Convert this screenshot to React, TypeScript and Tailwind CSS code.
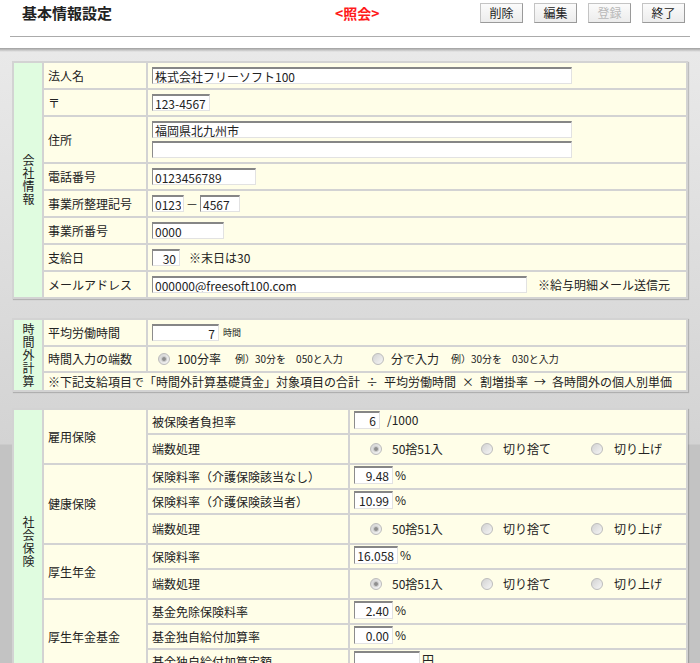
import React from "react";

const fieldBase =
  "h-[17px] bg-white border border-[#e2e2e2] border-t-2 border-t-[#868686] border-l-[#8c8c8c] px-[2px] text-[12px] leading-[13px] text-[#222] outline-none align-middle";

function Field({ w, value, right, tall }: { w: string; value?: string; right?: boolean; tall?: boolean }) {
  return (
    <input
      readOnly
      value={value ?? ""}
      className={`${fieldBase} ${w} ${right ? "text-right pr-[3px]" : ""} ${tall ? "h-[18px]" : ""}`}
    />
  );
}

function Radio({ checked }: { checked?: boolean }) {
  return (
    <span className="inline-flex w-[12px] h-[12px] shrink-0 items-center justify-center rounded-full border border-[#bcbcbc] bg-[linear-gradient(135deg,#d2d2d2,#f6f6f6)]">
      {checked && <span className="w-[6px] h-[6px] rounded-full border border-[#cfcfcf] bg-[#8e8e8e]" />}
    </span>
  );
}

function Vertical({ text }: { text: string }) {
  return (
    <div className="flex justify-center">
      <span className="[writing-mode:vertical-rl] [text-orientation:upright] text-[12px] leading-[14px] tracking-[1px]">
        {text}
      </span>
    </div>
  );
}

function Rounding() {
  return (
    <div className="flex items-center text-[12px] pl-[16px]">
      <div className="flex items-center gap-[10px] w-[111px]">
        <Radio checked />
        <span>50捨51入</span>
      </div>
      <div className="flex items-center gap-[10px] w-[110px]">
        <Radio />
        <span>切り捨て</span>
      </div>
      <div className="flex items-center gap-[11px]">
        <Radio />
        <span>切り上げ</span>
      </div>
    </div>
  );
}

function Rate({ w, v, unit, gap }: { w: string; v?: string; unit: string; gap?: string }) {
  return (
    <div className="flex items-center">
      <Field w={w} value={v} right tall />
      <span className={gap ?? "ml-[2px]"}>{unit}</span>
    </div>
  );
}

const green = "bg-[#e0fce0] align-middle";
const label = "bg-[#fffee8] px-[4px] text-[12px] leading-[14px] whitespace-nowrap";
const value = "bg-[#fffee8] px-[4px] text-[12px] leading-[14px] whitespace-nowrap";
const top = "align-top pt-[1px]";
const tableCls =
  "w-[676px] table-fixed border-separate border-spacing-[2px] bg-[#d3d3d3] shadow-[1px_1px_1px_rgba(0,0,0,0.18)]";

export default function App() {
  return (
    <div className="min-h-[663px] bg-white text-[#222] font-['Noto_Sans_CJK_JP','Liberation_Sans',sans-serif]">
      {/* header */}
      <div className="h-[48px] pt-[3px]">
        <div className="flex items-center h-[20px]">
          <h1 className="w-[335px] pl-[22px] text-[15px] font-bold leading-[20px]">基本情報設定</h1>
          <span className="w-[145px] text-[14px] font-bold text-[#ff1a1a] leading-[20px]">&lt;照会&gt;</span>
          <div className="flex gap-[11px]">
            {["削除", "編集", "登録", "終了"].map((b) => (
              <button
                key={b}
                className={`w-[43px] h-[20px] border border-[#c4c4c4] border-r-[#9a9a9a] border-b-[#9a9a9a] bg-[linear-gradient(#fbfbfb,#ececec)] text-[12px] leading-[16px] ${
                  b === "登録" ? "text-[#b9b9b9]" : "text-[#222]"
                }`}
              >
                {b}
              </button>
            ))}
          </div>
        </div>
        <div className="mx-[10px] mt-[13px] border-t border-[#ababab]" />
      </div>
      <div className="h-[4px] bg-[linear-gradient(#9e9e9e,#e9e9e9)]" />

      <div className="px-[12px] pt-[9px] pb-[20px] bg-[linear-gradient(#e9e9e9,#d3d3d3_392px,#c3c3c3_393px)]">
        {/* 会社情報 */}
        <table className={tableCls}>
          <colgroup>
            <col className="w-[28px]" />
            <col className="w-[102px]" />
            <col />
          </colgroup>
          <tbody>
            <tr>
              <td rowSpan={8} className={green}>
                <Vertical text="会社情報" />
              </td>
              <td className={`${label} h-[25px]`}>法人名</td>
              <td className={value}>
                <Field w="w-[420px]" value="株式会社フリーソフト100" />
              </td>
            </tr>
            <tr>
              <td className={`${label} h-[25px]`}>〒</td>
              <td className={value}>
                <Field w="w-[58px]" value="123-4567" />
              </td>
            </tr>
            <tr>
              <td className={`${label} h-[45px]`}>住所</td>
              <td className={value}>
                <div className="flex flex-col gap-[3px]">
                  <Field w="w-[420px]" value="福岡県北九州市" />
                  <Field w="w-[420px]" />
                </div>
              </td>
            </tr>
            <tr>
              <td className={`${label} h-[25px]`}>電話番号</td>
              <td className={value}>
                <Field w="w-[104px]" value="0123456789" />
              </td>
            </tr>
            <tr>
              <td className={`${label} h-[25px]`}>事業所整理記号</td>
              <td className={value}>
                <div className="flex items-center">
                  <Field w="w-[32px]" value="0123" />
                  <span className="w-[16px] text-center">－</span>
                  <Field w="w-[40px]" value="4567" />
                </div>
              </td>
            </tr>
            <tr>
              <td className={`${label} h-[25px]`}>事業所番号</td>
              <td className={value}>
                <Field w="w-[72px]" value="0000" />
              </td>
            </tr>
            <tr>
              <td className={`${label} h-[25px]`}>支給日</td>
              <td className={value}>
                <div className="flex items-center">
                  <Field w="w-[28px]" value="30" right />
                  <span className="ml-[9px]">※末日は30</span>
                </div>
              </td>
            </tr>
            <tr>
              <td className={`${label} h-[25px]`}>メールアドレス</td>
              <td className={value}>
                <div className="flex items-center">
                  <Field w="w-[375px]" value="000000@freesoft100.com" />
                  <span className="ml-[11px]">※給与明細メール送信元</span>
                </div>
              </td>
            </tr>
          </tbody>
        </table>

        {/* 時間外計算 */}
        <table className={`${tableCls} mt-[19px]`}>
          <colgroup>
            <col className="w-[28px]" />
            <col className="w-[102px]" />
            <col />
          </colgroup>
          <tbody>
            <tr>
              <td rowSpan={3} className={green}>
                <Vertical text="時間外計算" />
              </td>
              <td className={`${label} h-[25px]`}>平均労働時間</td>
              <td className={value}>
                <div className="flex items-center">
                  <Field w="w-[67px]" value="7" right />
                  <span className="ml-[4px] text-[9px]">時間</span>
                </div>
              </td>
            </tr>
            <tr>
              <td className={`${label} h-[24px]`}>時間入力の端数</td>
              <td className={value}>
                <div className="flex items-center pl-[6px]">
                  <div className="flex items-center w-[214px]">
                    <Radio checked />
                    <span className="ml-[7px]">100分率</span>
                    <span className="ml-[14px] text-[10px]">例）30分を　050と入力</span>
                  </div>
                  <div className="flex items-center">
                    <Radio />
                    <span className="ml-[7px]">分で入力</span>
                    <span className="ml-[12px] text-[10px]">例）30分を　030と入力</span>
                  </div>
                </div>
              </td>
            </tr>
            <tr>
              <td colSpan={2} className={`${label} h-[17px]`}>
                ※下記支給項目で「時間外計算基礎賃金」対象項目の合計
                <span className="mx-[6px]">÷</span>平均労働時間
                <span className="mx-[6px]">×</span>割増掛率
                <span className="mx-[6px]">→</span>各時間外の個人別単価
              </td>
            </tr>
          </tbody>
        </table>

        {/* 社会保険 */}
        <table className={`${tableCls} mt-[16px]`}>
          <colgroup>
            <col className="w-[28px]" />
            <col className="w-[102px]" />
            <col className="w-[200px]" />
            <col />
          </colgroup>
          <tbody>
            <tr>
              <td rowSpan={10} className={green}>
                <Vertical text="社会保険" />
              </td>
              <td rowSpan={2} className={label}>雇用保険</td>
              <td className={`${label} h-[23px]`}>被保険者負担率</td>
              <td className={`${value} ${top}`}>
                <Rate w="w-[26px]" v="6" unit="/1000" gap="ml-[7px]" />
              </td>
            </tr>
            <tr>
              <td className={`${label} h-[28px]`}>端数処理</td>
              <td className={value}>
                <Rounding />
              </td>
            </tr>
            <tr>
              <td rowSpan={3} className={label}>健康保険</td>
              <td className={`${label} h-[23px]`}>保険料率（介護保険該当なし）</td>
              <td className={`${value} ${top}`}>
                <Rate w="w-[39px]" v="9.48" unit="%" />
              </td>
            </tr>
            <tr>
              <td className={`${label} h-[23px]`}>保険料率（介護保険該当者）</td>
              <td className={`${value} ${top}`}>
                <Rate w="w-[39px]" v="10.99" unit="%" />
              </td>
            </tr>
            <tr>
              <td className={`${label} h-[28px]`}>端数処理</td>
              <td className={value}>
                <Rounding />
              </td>
            </tr>
            <tr>
              <td rowSpan={2} className={label}>厚生年金</td>
              <td className={`${label} h-[23px]`}>保険料率</td>
              <td className={`${value} ${top}`}>
                <Rate w="w-[44px]" v="16.058" unit="%" />
              </td>
            </tr>
            <tr>
              <td className={`${label} h-[28px]`}>端数処理</td>
              <td className={value}>
                <Rounding />
              </td>
            </tr>
            <tr>
              <td rowSpan={3} className={label}>厚生年金基金</td>
              <td className={`${label} h-[23px]`}>基金免除保険料率</td>
              <td className={`${value} ${top}`}>
                <Rate w="w-[39px]" v="2.40" unit="%" />
              </td>
            </tr>
            <tr>
              <td className={`${label} h-[23px]`}>基金独自給付加算率</td>
              <td className={`${value} ${top}`}>
                <Rate w="w-[39px]" v="0.00" unit="%" />
              </td>
            </tr>
            <tr>
              <td className={`${label} h-[23px]`}>基金独自給付加算定額</td>
              <td className={`${value} ${top}`}>
                <Rate w="w-[66px]" unit="円" />
              </td>
            </tr>
          </tbody>
        </table>
      </div>
    </div>
  );
}
